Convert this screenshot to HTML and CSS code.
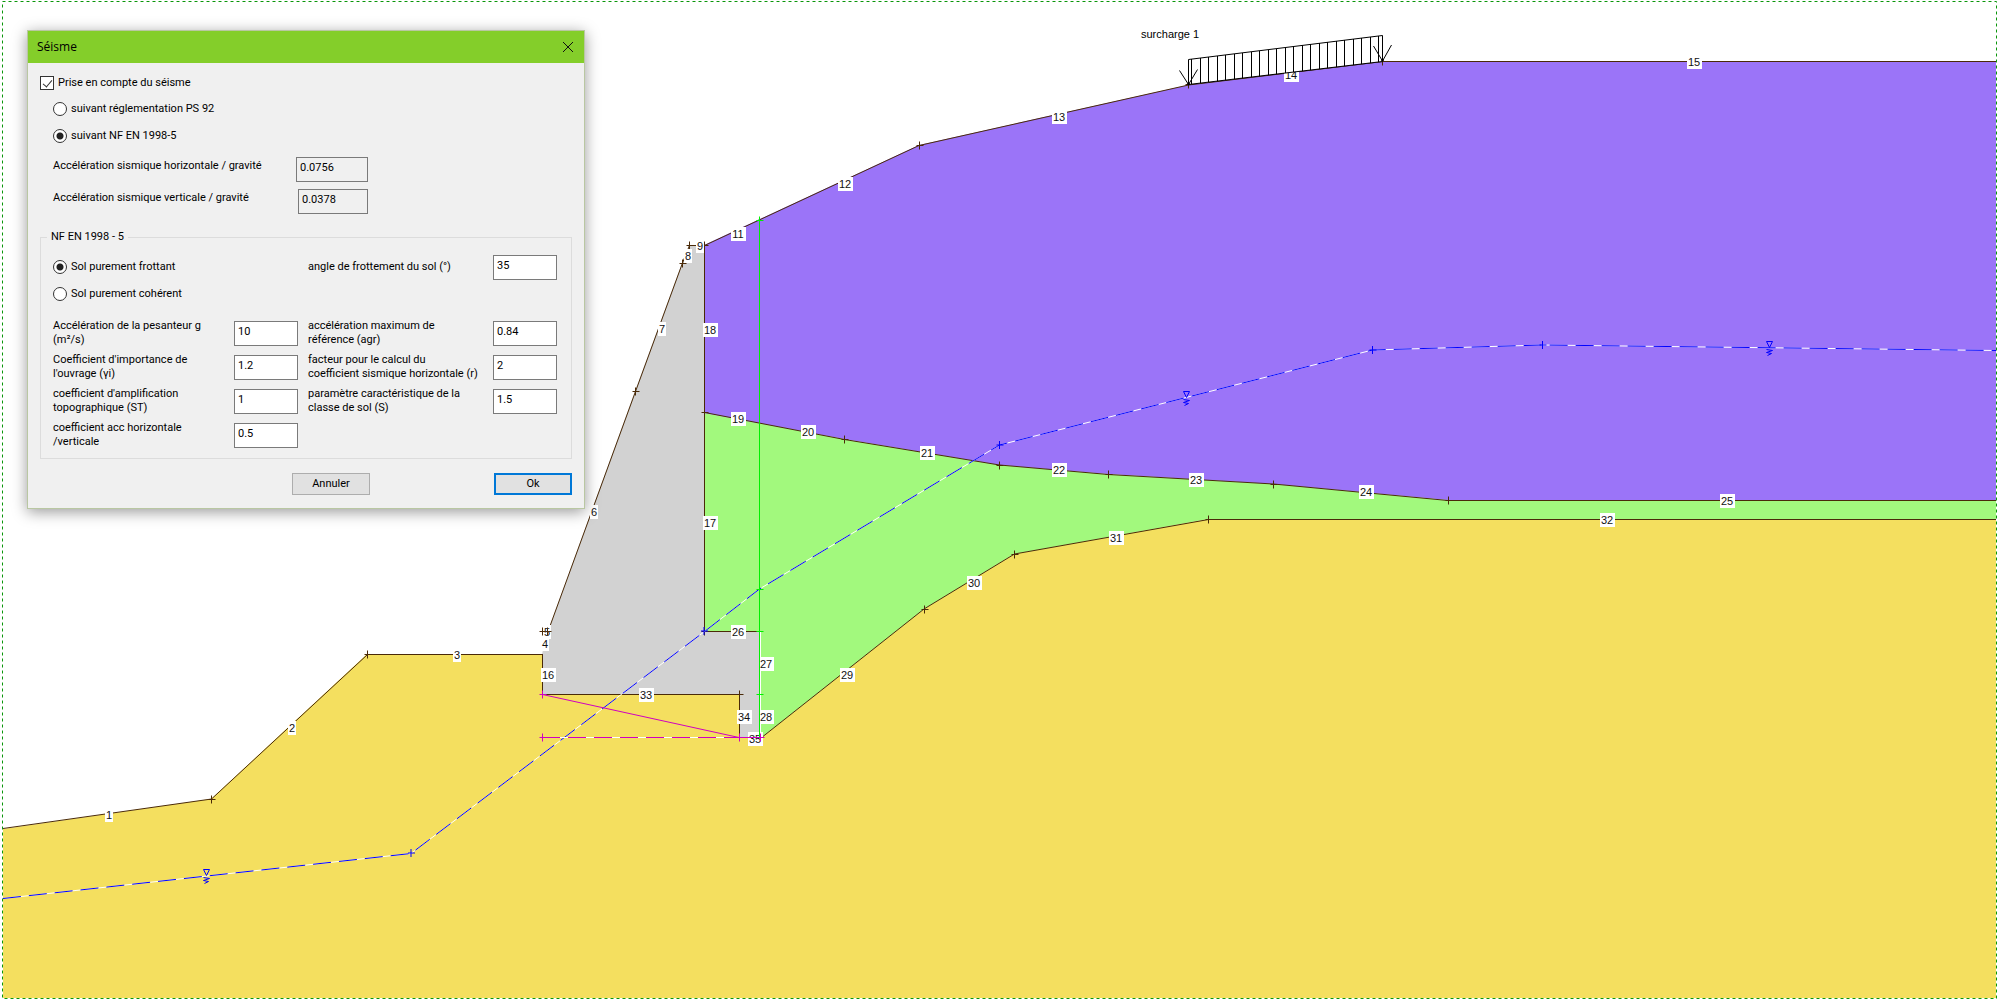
FILE: index.html
```html
<!DOCTYPE html>
<html lang="fr">
<head>
<meta charset="utf-8">
<title>Séisme</title>
<link rel="stylesheet" href="styles.css">
</head>
<body>
<main class="workspace">
  <svg class="section" viewBox="0 0 2000 1000" role="img" aria-label="Coupe du mur de soutènement">
    <defs>
      <g id="node"><path d="M-3 0H4M0 -4V4"/></g>
      <g id="water"><path d="M-3 -7H3L0 -1ZM-3 1L3 2L-3 4L2 5L-2 7"/></g>
      <rect id="tag1" x="-4" y="-7" width="8" height="14"/>
      <rect id="tag2" x="-7" y="-7" width="15" height="14"/>
    </defs>

    <!-- soil layers and wall -->
    <path class="soil-sand" d="M3 829L211 799L367 654H542V694H739V738H761L924 609L1014 554L1208 519H1996V998H3Z"/>
    <path class="soil-green" d="M704 413L844 439L999 465L1108 474L1273 484L1448 500H1996V519H1208L1014 554L924 609L761 738V631H704Z"/>
    <path class="soil-purple" d="M704 245L919 145L1188 85L1383 61H1996V500H1448L1273 484L1108 474L999 465L844 439L704 413Z"/>
    <path class="wall" d="M542 694V654L548 631L635 391L682 263L689 245H704V631H760V738H739V694Z"/>

    <!-- layer boundaries -->
    <g class="edge">
      <path d="M3 828.500L211.500 799L367.500 654.500H542.500"/>
      <path d="M542.500 631.500H548L635.500 391.500L682.500 263L689.500 245.500H704.500L919 145.500L1188.500 85L1383 61.500H1996"/>
      <path d="M542.500 654V694.500H739.500V738M704.500 245V631.500H760"/>
      <path d="M704.500 412.500L844.500 439.500L999.500 465L1108.500 474.500L1273.500 484L1448 500.500H1996"/>
      <path d="M761 738L924 609L1014.500 554L1208.500 519.500H1996"/>
      <use href="#node" x="211.500" y="799.500"/><use href="#node" x="367.500" y="654.500"/>
      <use href="#node" x="635.500" y="391.500"/><use href="#node" x="682.500" y="263.500"/>
      <use href="#node" x="689.500" y="245.500"/><use href="#node" x="704.500" y="245.500"/>
      <use href="#node" x="919.500" y="145.500"/><use href="#node" x="1188.500" y="84.500"/>
      <use href="#node" x="1382.500" y="61.500"/><use href="#node" x="704.500" y="412.500"/>
      <use href="#node" x="844.500" y="439.500"/><use href="#node" x="999.500" y="465.500"/>
      <use href="#node" x="1108.500" y="474.500"/><use href="#node" x="1273.500" y="484.500"/>
      <use href="#node" x="1448.500" y="500.500"/><use href="#node" x="924.500" y="609.500"/>
      <use href="#node" x="1014.500" y="554.500"/><use href="#node" x="1208.500" y="519.500"/>
      <use href="#node" x="704.500" y="631.500"/><use href="#node" x="739.500" y="694.500"/>
    </g>

    <!-- segment numbers -->
    <g class="tag">
      <use href="#tag1" x="109" y="815"/><text x="109" y="819">1</text>
      <use href="#tag1" x="292" y="728"/><text x="292" y="732">2</text>
      <use href="#tag1" x="457" y="655"/><text x="457" y="659">3</text>
      <use href="#tag1" x="545" y="644"/><text x="545" y="648">4</text>
      <use href="#tag1" x="547" y="632"/><text x="547" y="636">5</text>
      <use href="#tag1" x="594" y="512"/><text x="594" y="516">6</text>
      <use href="#tag1" x="662" y="329"/><text x="662" y="333">7</text>
      <use href="#tag1" x="688" y="256"/><text x="688" y="260">8</text>
      <use href="#tag1" x="700" y="246"/><text x="700" y="250">9</text>
      <use href="#tag2" x="738" y="234"/><text x="738" y="238">11</text>
      <use href="#tag2" x="845" y="184"/><text x="845" y="188">12</text>
      <use href="#tag2" x="1059" y="117"/><text x="1059" y="121">13</text>
      <use href="#tag2" x="1291" y="75"/><text x="1291" y="79">14</text>
      <use href="#tag2" x="1694" y="62"/><text x="1694" y="66">15</text>
      <use href="#tag2" x="548" y="675"/><text x="548" y="679">16</text>
      <use href="#tag2" x="710" y="523"/><text x="710" y="527">17</text>
      <use href="#tag2" x="710" y="330"/><text x="710" y="334">18</text>
      <use href="#tag2" x="738" y="419"/><text x="738" y="423">19</text>
      <use href="#tag2" x="808" y="432"/><text x="808" y="436">20</text>
      <use href="#tag2" x="927" y="453"/><text x="927" y="457">21</text>
      <use href="#tag2" x="1059" y="470"/><text x="1059" y="474">22</text>
      <use href="#tag2" x="1196" y="480"/><text x="1196" y="484">23</text>
      <use href="#tag2" x="1366" y="492"/><text x="1366" y="496">24</text>
      <use href="#tag2" x="1727" y="501"/><text x="1727" y="505">25</text>
      <use href="#tag2" x="738" y="632"/><text x="738" y="636">26</text>
      <use href="#tag2" x="766" y="664"/><text x="766" y="668">27</text>
      <use href="#tag2" x="766" y="717"/><text x="766" y="721">28</text>
      <use href="#tag2" x="847" y="675"/><text x="847" y="679">29</text>
      <use href="#tag2" x="974" y="583"/><text x="974" y="587">30</text>
      <use href="#tag2" x="1116" y="538"/><text x="1116" y="542">31</text>
      <use href="#tag2" x="1607" y="520"/><text x="1607" y="524">32</text>
      <use href="#tag2" x="646" y="695"/><text x="646" y="699">33</text>
      <use href="#tag2" x="744" y="717"/><text x="744" y="721">34</text>
      <use href="#tag2" x="755" y="739"/><text x="755" y="743">35</text>
    </g>
    <g class="edge">
      <use href="#node" x="542.500" y="631.500"/><use href="#node" x="547.500" y="631.500"/>
    </g>

    <!-- water table -->
    <path class="water-base" d="M3 898.500L411 853.500L704.500 631.500L759.500 589L999.500 445L1372.500 350L1542.500 345L1996 350.500"/>
    <path class="water-line" d="M3 898.500L411 853.500L704.500 631.500L759.500 589L999.500 445L1372.500 350L1542.500 345L1996 350.500"/>
    <g class="water-mark">
      <use href="#node" x="411" y="853"/><use href="#node" x="704" y="631"/>
      <use href="#node" x="999.500" y="445"/><use href="#node" x="1372.500" y="350"/><use href="#node" x="1542.500" y="345"/>
      <use href="#water" x="206.500" y="876.500"/><use href="#water" x="1186.500" y="398.500"/><use href="#water" x="1769.500" y="348.500"/>
    </g>

    <!-- fictitious back face of the wall -->
    <g class="back-face">
      <path d="M759.500 220V738"/>
      <use href="#node" x="759.500" y="220.500"/><use href="#node" x="759.500" y="589.500"/>
      <use href="#node" x="759.500" y="631.500"/><use href="#node" x="759.500" y="694.500"/>
    </g>

    <!-- base of the footing -->
    <path class="base-under" d="M542 737.500H739"/>
    <g class="base-line">
      <path class="base-dash" d="M542 737.500H739"/>
      <path d="M739 737.500H762M542.500 694.500L739 737.500"/>
      <use href="#node" x="542.500" y="694.500"/><use href="#node" x="542.500" y="737.500"/>
      <use href="#node" x="739.500" y="737.500"/><use href="#node" x="760.500" y="737.500"/>
    </g>

    <!-- surcharge -->
    <g class="load">
      <path class="load-body" d="M1188.500 59.500L1382.500 35.500V61.500L1188.500 84.500Z"/>
      <path d="M1191.500 59V84M1200.500 58V83M1208.500 57V82M1217.500 56V81M1225.500 55V80M1234.500 54V79M1242.500 53V78M1251.500 52V77M1259.500 51V76M1268.500 50V75M1276.500 49V74M1285.500 48V73M1293.500 47V72M1302.500 45V71M1310.500 44V70M1319.500 43V69M1327.500 42V68M1336.500 41V67M1344.500 40V66M1353.500 39V65M1361.500 38V64M1370.500 37V63M1378.500 36V62"/>
      <path d="M1179.500 70.500L1188.500 84.500L1197.500 69.500M1373.500 46L1382.500 61L1391.500 45"/>
      <circle cx="1188.500" cy="84" r="1"/><circle cx="1382.500" cy="60" r="1"/>
    </g>
    <text class="load-name" x="1141" y="38">surcharge 1</text>

    <rect class="frame-under" x="2.500" y="1.500" width="1994" height="997"/>
    <rect class="frame" x="2.500" y="1.500" width="1994" height="997"/>
  </svg>

  <form class="dialog" role="dialog" aria-labelledby="dialog-title">
    <header class="titlebar">
      <h1 class="title" id="dialog-title">Séisme</h1>
      <button class="close" type="button" aria-label="Fermer">
        <svg class="close-icon" viewBox="0 0 12 12"><path d="M1 1L11 11M11 1L1 11"/></svg>
      </button>
    </header>
    <div class="content">
      <label class="choice"><input class="check" type="checkbox" checked>Prise en compte du séisme</label>
      <label class="choice indent"><input class="radio" type="radio" name="norme">suivant réglementation PS 92</label>
      <label class="choice indent"><input class="radio" type="radio" name="norme" checked>suivant NF EN 1998-5</label>
      <div class="result">
        <label for="acc-h">Accélération sismique horizontale / gravité</label>
        <input class="field" id="acc-h" value="0.0756" readonly>
      </div>
      <div class="result">
        <label for="acc-v">Accélération sismique verticale / gravité</label>
        <input class="field narrow" id="acc-v" value="0.0378" readonly>
      </div>

      <fieldset class="group">
        <legend class="legend">NF EN 1998 - 5</legend>
        <div class="soil">
          <div class="soil-kind">
            <label class="choice"><input class="radio" type="radio" name="sol" checked>Sol purement frottant</label>
            <label class="choice"><input class="radio" type="radio" name="sol">Sol purement cohérent</label>
          </div>
          <label class="angle" for="angle">angle de frottement du sol (°)</label>
          <input class="field" id="angle" value="35">
        </div>
        <div class="params">
          <label for="g">Accélération de la pesanteur g<br>(m²/s)</label>
          <input class="field" id="g" value="10">
          <label for="agr">accélération maximum de<br>référence (agr)</label>
          <input class="field" id="agr" value="0.84">
          <label for="gi">Coefficient d'importance de<br>l'ouvrage (γi)</label>
          <input class="field" id="gi" value="1.2">
          <label for="r">facteur pour le calcul du<br>coefficient sismique horizontale (r)</label>
          <input class="field" id="r" value="2">
          <label for="st">coefficient d'amplification<br>topographique (ST)</label>
          <input class="field" id="st" value="1">
          <label for="s">paramètre caractéristique de la<br>classe de sol (S)</label>
          <input class="field" id="s" value="1.5">
          <label for="hv">coefficient acc horizontale<br>/verticale</label>
          <input class="field" id="hv" value="0.5">
        </div>
      </fieldset>

      <footer class="actions">
        <button class="button" type="button">Annuler</button>
        <button class="button default" type="submit">Ok</button>
      </footer>
    </div>
  </form>
</main>
</body>
</html>
```

FILE: styles.css
```css
* { box-sizing: border-box; }

body {
  margin: 0;
  background: #fff;
  color: #000;
  font: 11px/14px Roboto, "Liberation Sans", sans-serif;
}

.workspace { position: relative; }

/* drawing */
.section { display: block; width: 100%; height: auto; fill: none; }
.soil-sand { fill: #f4df5f; }
.soil-green { fill: #a2f97d; }
.soil-purple { fill: #9b74f8; }
.wall { fill: #d2d2d2; }
.edge { stroke: #4a2a08; }
.tag { fill: #fff; }
.tag text {
  fill: #111;
  font: 11px "Liberation Sans", sans-serif;
  text-anchor: middle;
}
.water-base, .base-under, .frame-under { stroke: #fff; }
.water-line { stroke: #0000ff; stroke-dasharray: 18 8; }
.water-mark { stroke: #0000ff; }
.back-face { stroke: #00f000; }
.base-line { stroke: #d000c0; }
.base-dash { stroke-dasharray: 18 8; }
.load { stroke: #000; }
.load-body { fill: #fff; }
.load-name { fill: #000; font: 11px "Liberation Sans", sans-serif; }
.frame { stroke: #0a960a; stroke-dasharray: 3 3; }

/* dialog window */
.dialog {
  position: absolute;
  top: 30px;
  left: 27px;
  width: 558px;
  background: #f0f0f0;
  border: 1px solid #b9c7a2;
  box-shadow: 0 3px 14px rgba(0, 0, 0, .4);
}
.titlebar {
  display: flex;
  align-items: center;
  justify-content: space-between;
  height: 32px;
  padding: 0 10px 0 9px;
  background: #84ce2a;
}
.title { margin: 0; font: 12px/16px "Open Sans", sans-serif; }
.close { display: flex; padding: 0; border: 0; background: none; }
.close-icon { width: 12px; height: 12px; fill: none; stroke: #111; }

.content { padding: 8px 12px 13px 12px; }
.choice { display: flex; align-items: center; gap: 4px; height: 24px; }
.indent { height: 27px; margin-left: 13px; }
.check, .radio {
  appearance: none;
  width: 14px;
  height: 14px;
  margin: 0;
  background: #fff;
  border: 1px solid #333;
}
.radio { border-radius: 50%; }
.radio:checked { background: radial-gradient(circle, #222 3px, #fff 4px); }
.check { position: relative; }
.check:checked::after {
  content: "";
  position: absolute;
  left: 4px;
  top: 1px;
  width: 4px;
  height: 8px;
  border: solid #333;
  border-width: 0 1px 1px 0;
  transform: rotate(40deg);
}

.result {
  display: flex;
  justify-content: space-between;
  width: 315px;
  height: 32px;
  margin-left: 13px;
  padding-top: 8px;
}
.result label { padding-top: 2px; }
.result .field { width: 72px; background: #f0f0f0; }
.result .narrow { width: 70px; }

.field {
  width: 64px;
  height: 25px;
  padding: 0 3px 4px;
  border: 1px solid #7a7a7a;
  border-radius: 0;
  background: #fff;
  color: #000;
  font: inherit;
}

.group {
  margin: 17px 0 0;
  padding: 11px 14px 10px 12px;
  border: 1px solid #dcdcdc;
}
.legend { margin-left: -6px; padding: 0 4px; }
.soil {
  display: grid;
  grid-template-columns: 255px 1fr 64px;
  align-items: start;
}
.soil-kind { display: grid; gap: 3px; }
.angle { padding-top: 5px; }
.params {
  display: grid;
  grid-template-columns: 171px 64px 175px 64px;
  column-gap: 10px;
  grid-auto-rows: 25px;
  row-gap: 9px;
  margin-top: 15px;
}
.params label { margin-top: -2px; white-space: nowrap; }

.actions {
  display: flex;
  justify-content: flex-end;
  gap: 124px;
  margin-top: 14px;
}
.button {
  width: 78px;
  height: 22px;
  padding: 0;
  border: 1px solid #adadad;
  background: #e1e1e1;
  color: #000;
  font: inherit;
}
.default { border: 2px solid #0078d7; }
```
